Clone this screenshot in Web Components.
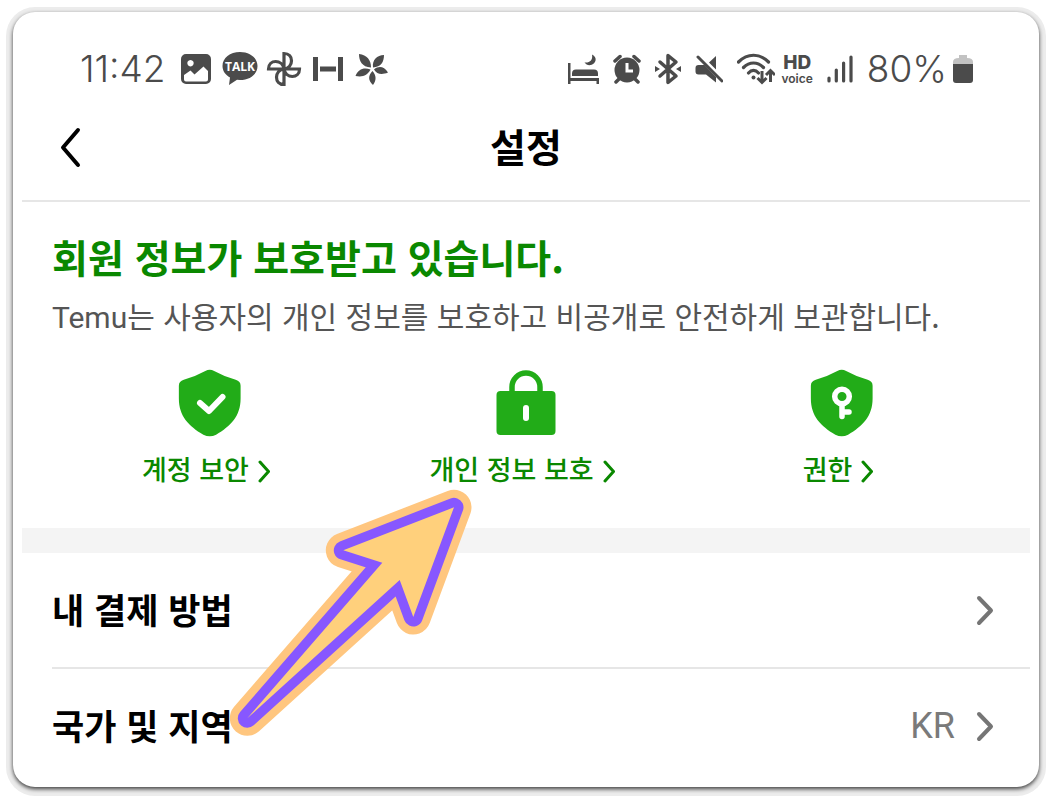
<!DOCTYPE html>
<html lang="ko">
<head>
<meta charset="utf-8">
<meta name="viewport" content="width=device-width, initial-scale=1">
<title>설정</title>
<style>
body {
  margin: 0;
  background: #fff;
  color: #000;
  font-family: "Noto Sans CJK KR", sans-serif;
}
.latin {
  font-family: Roboto, sans-serif;
  line-height: 1;
}
</style>
</head>
<body>
<phone-card>
  <status-bar time="11:42" battery="80%"></status-bar>
  <nav-header>설정</nav-header>
  <security-panel>
    <span slot="title">회원 정보가 보호받고 있습니다.</span>
    <span slot="text"><span class="latin">Temu</span>는 사용자의 개인 정보를 보호하고 비공개로 안전하게 보관합니다.</span>
    <security-link icon="check">계정 보안</security-link>
    <security-link icon="lock">개인 정보 보호</security-link>
    <security-link icon="key">권한</security-link>
    <pointer-arrow slot="pointer"></pointer-arrow>
  </security-panel>
  <setting-row>내 결제 방법</setting-row>
  <setting-row value="KR">국가 및 지역</setting-row>
</phone-card>

<script>
/**
 * Create a template from a string of HTML
 *
 * @param {string} html
 * @returns {HTMLTemplateElement} template
 */
function createTemplate (html) {
  const template = document.createElement('template')
  template.innerHTML = html
  return template
}

/**
 * Base class, clones the template of the class into an open shadow root
 */
class BaseElement extends HTMLElement {
  constructor () {
    super()
    this.attachShadow({ mode: 'open' })
    this.shadowRoot.appendChild(this.constructor.template.content.cloneNode(true))
  }
}

/**
 * The rounded card around the screen
 */
class PhoneCard extends BaseElement {
  static template = createTemplate(`
<style>
:host {
  display: block;
  box-sizing: border-box;
  min-height: calc(100vh - 26px);
  margin: 12px 13px 14px;
  padding: 0 9px;
  border-radius: 22px;
  background: #fff;
  box-shadow: 0 2px 4px rgba(0, 0, 0, .75), 0 2px 0 7px #ececec;
}
</style>
<slot></slot>
`)
}

/**
 * Clock, notification icons and system icons
 */
class StatusBar extends BaseElement {
  static template = createTemplate(`
<style>
:host {
  display: flex;
  align-items: center;
  justify-content: space-between;
  padding: 33px 57px 0 58px;
  height: 48px;
  color: #4b4b4b;
  font-family: Inter, sans-serif;
}
div {
  display: flex;
  align-items: center;
}
svg {
  display: block;
  flex: none;
  fill: currentColor;
}
.line {
  fill: none;
  stroke: currentColor;
}
#time, #battery {
  font-size: 37px;
  line-height: 40px;
  font-weight: 300;
}
#apps {
  gap: 8px;
}
#left {
  gap: 12px;
}
#right {
  gap: 14px;
}
#network, #power {
  gap: 6px;
}
#hd {
  flex-direction: column;
  font-size: 12px;
  line-height: 14px;
  font-weight: 600;
}
#hd b {
  font-size: 19px;
  line-height: 19px;
  font-weight: 800;
}
</style>
<div id="left">
  <span id="time"></span>
  <div id="apps">
    <svg width="36" height="36" viewBox="0 0 36 36">
      <path fill-rule="evenodd" d="M8 3h20a5 5 0 0 1 5 5v20a5 5 0 0 1-5 5H8a5 5 0 0 1-5-5V8a5 5 0 0 1 5-5zM12.500 9a3.200 3.200 0 1 0 .01 0zM6 24v4.500q0 2 2 2h20q2 0 2-2V20l-4.500-4.500-9 8-4-4z"/>
    </svg>
    <svg width="36" height="36" viewBox="0 0 36 36">
      <path d="M18 1C8 1 .500 7 .500 15c0 5 3 9 7.500 11.500L7 34l8-5.300 3 .3c10 0 17.500-6 17.500-14S28 1 18 1z"/>
      <text x="18" y="20" text-anchor="middle" fill="#fff" font-family="Open Sans, sans-serif" font-size="12" font-weight="700">TALK</text>
    </svg>
    <svg class="line" width="36" height="36" viewBox="0 0 36 36" stroke-width="3.200">
      <path d="M18 18V2.500c10 0 10 14 0 15.500M18 18h15.500c0 10-14 10-15.500 0M18 18v15.500c-10 0-10-14 0-15.500M18 18H2.500c0-10 14-10 15.500 0"/>
    </svg>
    <svg width="36" height="36" viewBox="0 0 36 36">
      <path d="M3 6h5v24H3zM28 6h5v24h-5zM10 15.500h16v5H10z"/>
    </svg>
    <svg width="36" height="36" viewBox="0 0 36 36">
      <path d="M17 16.500C8 16 5 10 5 3c8 1 12 6 12 13.500zM19 16.500C18 9 23 4 30 4c0 7-3 12-11 12.500zM20 18.500c5-4 10-3 14 3-6 2.500-11 2-14-3zM18.500 20c4 5 4 9 .5 14-5-5-5-9-.5-14zM16.500 18.500c-3 6-8 8-15 6.500 2.500-6.500 8-9 15-6.500z"/>
    </svg>
  </div>
</div>
<div id="right">
  <svg width="32" height="32" viewBox="0 0 32 32">
    <path d="M1 10h2.500v15H32v6h-2.500v-3H3.500v3H1zM5 23v-2.500q0-4 4-4h18q4 0 4 4V23zM25 1.500c6 3 4 9-1 10.500-3 .5-5-.5-6.500-2.500C23 10 26 7 25 1.500z"/>
  </svg>
  <svg width="28" height="30" viewBox="0 0 28 30">
    <circle cx="14" cy="16" r="12.500"/>
    <path class="line" stroke-width="3.500" stroke-linecap="round" d="M2 7l5-4.500M26 7l-5-4.500M6 25l-3 3M22 25l3 3"/>
    <path fill="none" stroke="#fff" stroke-width="3" d="M14 9v8h6"/>
  </svg>
  <svg width="26" height="32" viewBox="0 0 26 32">
    <path class="line" stroke-width="3.500" stroke-linecap="round" stroke-linejoin="round" d="M5 9l16 14-8 6.500V2.500L21 9 5 23"/>
    <path d="M0 13l5 3-5 3zM26 13l-5 3 5 3z"/>
  </svg>
  <svg width="28" height="30" viewBox="0 0 28 30">
    <path d="M3.500 11h6L21 23v5.500l-10-8H3.500q-3 0-3-3v-3.500q0-3 3-3zM14 8.500l7-6.500v13.500z"/>
    <path class="line" stroke-width="3" stroke-linecap="round" d="M3 3l24 24"/>
  </svg>
  <div id="network">
    <svg width="38" height="32" viewBox="0 0 38 32">
      <path class="line" stroke-width="3.200" stroke-linecap="round" d="M1.500 9c9-9 21-9 30 0M6.500 14.500c6-6 14-6 20 0M11.500 20c3-3.500 7-3.500 10 0"/>
      <path class="line" stroke-width="3" d="M25 18v11M20.500 25l4.500 4.500 4.500-4.500M33.500 29V18M29 22l4.500-4.500L38 22"/>
      <circle cx="16.500" cy="24.500" r="2"/>
    </svg>
    <div id="hd"><b>HD</b><span>voice</span></div>
  </div>
  <svg class="line" width="26" height="28" viewBox="0 0 26 28" stroke-width="3.200" stroke-linecap="round">
    <path d="M2 26v-3M9.300 26V15M16.600 26V8M24 26V2"/>
  </svg>
  <div id="power">
    <span id="battery"></span>
    <svg width="20" height="28" viewBox="0 0 20 28">
      <path fill="#c2c2c2" d="M6 0h8v3q6 0 6 4v3H0V7q0-4 6-4z"/>
      <path d="M0 9h20v16q0 3-3 3H3q-3 0-3-3z"/>
    </svg>
  </div>
</div>
`)

  connectedCallback () {
    this.shadowRoot.querySelector('#time').textContent = this.getAttribute('time')
    this.shadowRoot.querySelector('#battery').textContent = this.getAttribute('battery')
  }
}

/**
 * Title bar with the back button
 */
class NavHeader extends BaseElement {
  static template = createTemplate(`
<style>
:host {
  display: grid;
  grid-template-columns: 96px 1fr 96px;
  align-items: center;
  height: 107px;
  border-bottom: 2px solid #e6e6e6;
}
button {
  justify-self: start;
  padding: 8px 8px 8px 36px;
  border: 0;
  background: none;
  cursor: pointer;
}
svg {
  display: block;
}
h1 {
  margin: 0;
  padding-bottom: 4px;
  text-align: center;
  font-size: 39px;
  line-height: 48px;
  font-weight: 700;
}
</style>
<button type="button" aria-label="뒤로">
  <svg width="24" height="42" viewBox="0 0 24 42" fill="none" stroke="#000" stroke-width="4" stroke-linecap="round" stroke-linejoin="round"><path d="M20 4L5 21.500 20 39"/></svg>
</button>
<h1><slot></slot></h1>
`)
}

/**
 * Green panel with the three security links
 */
class SecurityPanel extends BaseElement {
  static template = createTemplate(`
<style>
:host {
  display: block;
  position: relative;
  padding: 30px 30px 39px;
  border-bottom: 25px solid #f4f4f4;
}
h2 {
  margin: 0;
  color: #0a8800;
  font-size: 39px;
  line-height: 48px;
  font-weight: 700;
}
p {
  margin: 13px 0 0;
  color: #555;
  font-size: 30px;
  line-height: 44px;
}
#links {
  display: grid;
  grid-template-columns: repeat(3, 1fr);
  margin-top: 32px;
}
/* lies over the panel and the rows, its tip stays at the middle link */
::slotted(pointer-arrow) {
  position: absolute;
  top: 283px;
  left: calc(50% - 301px);
  z-index: 1;
}
</style>
<h2><slot name="title"></slot></h2>
<p><slot name="text"></slot></p>
<div id="links"><slot></slot></div>
<slot name="pointer"></slot>
`)
}

const shield = '<path fill="#22ac18" d="M29 2.500q4.500-2.500 9 0 11 6 22 9 5 1.500 5 6v13c0 18-10 28-25 37q-6.500 3.500-13 0c-15-9-25-19-25-37v-13q0-4.500 5-6 11-3 22-9z" transform="translate(.9 -.5) scale(.98)"/>'

const icons = {
  check: shield + '<path fill="none" stroke="#fff" stroke-width="6" stroke-linecap="round" stroke-linejoin="round" d="M24 34l9 8 13.500-14"/>',
  lock: '<path fill="none" stroke="#22ac18" stroke-width="5.500" d="M20 24V18a14 14 0 0 1 28 0v6"/><rect x="4.500" y="22" width="59" height="44" rx="4" fill="#22ac18"/><path stroke="#fff" stroke-width="6" stroke-linecap="round" d="M34 39v10"/>',
  key: shield + '<g fill="none" stroke="#fff" stroke-width="5.500"><circle cx="34" cy="27.500" r="7.300"/><path stroke-linecap="round" d="M34 36v11.500M34 43h7"/></g>'
}

/**
 * Icon with a label and a chevron below
 */
class SecurityLink extends BaseElement {
  static template = createTemplate(`
<style>
:host {
  display: block;
}
a {
  display: flex;
  flex-direction: column;
  align-items: center;
  gap: 10px;
  color: #0a8800;
  text-decoration: none;
}
svg {
  display: block;
}
#label {
  display: flex;
  align-items: center;
  gap: 9px;
  padding-right: 8px;
  font-size: 27px;
  line-height: 40px;
  font-weight: 500;
}
#label svg {
  margin-top: 6px;
}
</style>
<a href="#">
  <svg id="icon" width="68" height="70" viewBox="0 0 68 70" aria-hidden="true"></svg>
  <span id="label"><slot></slot>
    <svg width="12" height="24" viewBox="0 0 12 24" fill="none" stroke="currentColor" stroke-width="3" stroke-linecap="round" stroke-linejoin="round"><path d="M2 2l8.500 9.500L2 21"/></svg>
  </span>
</a>
`)

  connectedCallback () {
    this.shadowRoot.querySelector('#icon').innerHTML = icons[this.getAttribute('icon')]
  }
}

/**
 * One row of the settings list
 */
class SettingRow extends BaseElement {
  static template = createTemplate(`
<style>
:host {
  display: block;
  margin-left: 30px;
}
:host(:not(:last-of-type)) {
  border-bottom: 2px solid #e6e6e6;
}
a {
  display: flex;
  align-items: center;
  gap: 20px;
  padding: 32px 35px 32px 0;
  color: #000;
  line-height: 50px;
  text-decoration: none;
}
#name {
  flex-grow: 1;
  padding-bottom: 2px;
  font-size: 35px;
  line-height: 48px;
  font-weight: 700;
}
#value {
  color: #7a7a7a;
  font-family: Roboto, sans-serif;
  font-size: 36px;
}
svg {
  display: block;
}
</style>
<a href="#">
  <span id="name"><slot></slot></span>
  <span id="value"></span>
  <svg width="20" height="32" viewBox="0 0 20 32" fill="none" stroke="#757575" stroke-width="4" stroke-linecap="round" stroke-linejoin="round"><path d="M4 4l12 12.500L4 29"/></svg>
</a>
`)

  connectedCallback () {
    this.shadowRoot.querySelector('#value').textContent = this.getAttribute('value') || ''
  }
}

/**
 * Big arrow, the same polygon drawn with two outlines
 */
class PointerArrow extends BaseElement {
  static template = createTemplate(`
<style>
:host {
  display: block;
  pointer-events: none;
}
svg {
  display: block;
}
</style>
<svg width="250" height="255" viewBox="225 485 250 255" stroke-linejoin="round" aria-hidden="true">
  <defs><path id="arrow" d="M454 507.300L343.300 550.300 382.300 562.700 247.300 718.300 399.700 580 413.300 617z"/></defs>
  <use href="#arrow" fill="#ffc67f" stroke="#ffc67f" stroke-width="35"/>
  <use href="#arrow" fill="#8757ff" stroke="#8757ff" stroke-width="19"/>
  <use href="#arrow" fill="#ffd07c"/>
</svg>
`)
}

// Register the custom elements
customElements.define('phone-card', PhoneCard)
customElements.define('status-bar', StatusBar)
customElements.define('nav-header', NavHeader)
customElements.define('security-link', SecurityLink)
customElements.define('security-panel', SecurityPanel)
customElements.define('setting-row', SettingRow)
customElements.define('pointer-arrow', PointerArrow)
</script>
</body>
</html>
